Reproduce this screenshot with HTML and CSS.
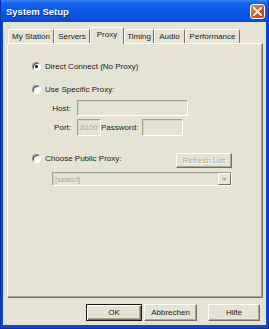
FILE: index.html
```html
<!DOCTYPE html>
<html lang="en">
<head>
    <meta charset="UTF-8">
    <title>System Setup</title>
    <link rel="stylesheet" href="styles.css">
</head>
<body>
<div class="window">
    <div class="titlebar">
        <span class="title">System Setup</span>
        <span class="close">
            <svg width="9" height="9" viewBox="0 0 9 9"><path d="M1 1L8 8M8 1L1 8" stroke="#fff" stroke-width="1.8" stroke-linecap="square"/></svg>
        </span>
    </div>
    <div class="client">
        <div class="tabs">
            <span class="tab tab-station">My Station</span>
            <span class="tab tab-servers">Servers</span>
            <span class="tab tab-proxy active">Proxy</span>
            <span class="tab tab-timing">Timing</span>
            <span class="tab tab-audio">Audio</span>
            <span class="tab tab-perf">Performance</span>
        </div>
        <div class="panel">
            <div class="radio checked"><span class="radio-dot"></span>Direct Connect (No Proxy)</div>
            <div class="radio row-specific"><span class="radio-dot"></span>Use Specific Proxy:</div>
            <div class="fields">
                <div class="field-row">
                    <span class="field-label">Host:</span>
                    <span class="input input-host"></span>
                </div>
                <div class="field-row row-port">
                    <span class="field-label">Port:</span>
                    <span class="input input-port">8100</span>
                    <span class="field-label label-pass">Password:</span>
                    <span class="input input-pass"></span>
                </div>
            </div>
            <div class="public-row">
                <div class="radio"><span class="radio-dot"></span>Choose Public Proxy:</div>
                <span class="btn btn-refresh">Refresh List</span>
            </div>
            <div class="select">
                <span class="select-text">[select]</span>
                <span class="select-arrow">
                    <svg width="5" height="3" viewBox="0 0 5 3"><path d="M0 0H5L2.5 3Z" fill="#aca899"/></svg>
                </span>
            </div>
        </div>
        <div class="buttons">
            <span class="btn btn-dialog default">OK</span>
            <span class="btn btn-dialog btn-cancel">Abbrechen</span>
            <span class="btn btn-dialog btn-help">Hilfe</span>
        </div>
    </div>
</div>
</body>
</html>
```

FILE: styles.css
```css
*{
    margin: 0;
    padding: 0;
    box-sizing: border-box;
}
body{
    font-family: "Liberation Sans", Arial, sans-serif;
    font-size: 8px;
    color: #000000;
    background: #ffffff;
}
.window{
    width: 269px;
    height: 329px;
    display: flex;
    flex-direction: column;
    background: #0a46d8;
    border-left: 1px solid #0831b0;
    border-right: 1px solid #0831b0;
    border-bottom: 1px solid #0831b0;
}
.titlebar{
    height: 22px;
    flex: none;
    display: flex;
    align-items: center;
    justify-content: space-between;
    padding: 0 3px 0 5px;
    background: linear-gradient(#3b87f5 0, #1462ea 3px, #0a57e4 12px, #0852de 18px, #0a48d0 22px);
}
.title{
    color: #ffffff;
    font-weight: bold;
    font-size: 9.5px;
    text-shadow: 1px 1px 0 #0c2f9a;
}
.close{
    width: 15px;
    height: 15px;
    display: flex;
    align-items: center;
    justify-content: center;
    border: 1px solid #ffffff;
    border-radius: 3px;
    background: linear-gradient(135deg, #ec8c6c, #d6522c 55%, #c0401c);
}
.client{
    flex: 1;
    display: flex;
    flex-direction: column;
    margin: 0 2px 3px 2px;
    padding-top: 5px;
    background: #e5e4d4;
}
.tabs{
    height: 16px;
    display: flex;
    align-items: flex-end;
    padding-left: 5px;
}
.tab{
    height: 14px;
    line-height: 13px;
    text-align: center;
    border: 1px solid;
    border-bottom: none;
    border-color: #ffffff #716f64 transparent #ffffff;
    border-radius: 2px 2px 0 0;
    background: #e5e4d4;
    color: #1a1a1a;
}
.tab-station{ width: 46px; }
.tab-servers{ width: 36px; }
.tab-proxy{ width: 34px; }
.tab-timing{ width: 30px; }
.tab-audio{ width: 31px; }
.tab-perf{ width: 55px; }
.tab.active{
    height: 17px;
    line-height: 13px;
    margin-bottom: -1px;
    position: relative;
    z-index: 1;
}
.panel{
    flex: 1;
    margin: 0 3px 0 4px;
    padding: 16px 0 0 24px;
    border: 1px solid;
    border-color: #ffffff #716f64 #716f64 #ffffff;
    box-shadow: inset -1px -1px 0 #aca899;
}
.radio{
    display: flex;
    align-items: center;
    height: 13px;
    color: #1a1a1a;
}
.radio-dot{
    width: 9px;
    height: 9px;
    flex: none;
    margin-right: 4px;
    border-radius: 50%;
    border: 1px solid;
    border-color: #8c8a80 #ffffff #ffffff #8c8a80;
    background: #ffffff;
    box-shadow: inset 1px 1px 0 #505050;
    display: flex;
    align-items: center;
    justify-content: center;
}
.radio.checked .radio-dot::after{
    content: "";
    width: 3px;
    height: 3px;
    border-radius: 50%;
    background: #000000;
}
.row-specific{
    margin-top: 10px;
}
.fields{
    margin: 4px 0 0 13px;
}
.field-row{
    display: flex;
    align-items: center;
    height: 16px;
}
.row-port{
    height: 17px;
    margin-top: 3px;
}
.field-label{
    width: 26px;
    margin-right: 6px;
    text-align: right;
    color: #1a1a1a;
}
.label-pass{
    width: auto;
    margin-right: 4px;
}
.input{
    height: 100%;
    padding-left: 2px;
    line-height: 15px;
    color: #aca899;
    border: 1px solid;
    border-color: #a09f92 #ffffff #ffffff #a09f92;
    box-shadow: inset 1px 1px 0 #d4d3c4;
    background: #e5e4d4;
}
.input-host{ width: 111px; }
.input-port{ width: 24px; }
.input-pass{ width: 41px; }
.public-row{
    width: 200px;
    margin-top: 17px;
    display: flex;
    justify-content: space-between;
    align-items: flex-start;
}
.public-row .radio{
    height: 10px;
}
.btn{
    display: flex;
    align-items: center;
    justify-content: center;
    border: 1px solid;
    border-color: #ffffff #716f64 #716f64 #ffffff;
    box-shadow: inset -1px -1px 0 #aca899;
    background: #e5e4d4;
    color: #1a1a1a;
}
.btn-refresh{
    width: 56px;
    height: 15px;
    color: #aca899;
    text-shadow: 1px 1px 0 #ffffff;
}
.select{
    width: 180px;
    height: 14px;
    margin: 4px 0 0 20px;
    display: flex;
    align-items: center;
    justify-content: space-between;
    border: 1px solid;
    border-color: #a09f92 #ffffff #ffffff #a09f92;
    box-shadow: inset 1px 1px 0 #d4d3c4;
}
.select-text{
    padding-left: 2px;
    color: #aca899;
}
.select-arrow{
    width: 13px;
    height: 12px;
    display: flex;
    align-items: center;
    justify-content: center;
    border: 1px solid;
    border-color: #ffffff #716f64 #716f64 #ffffff;
}
.buttons{
    display: flex;
    justify-content: flex-end;
    padding: 6px 6px 4px 0;
}
.btn-dialog{
    height: 17px;
    width: 52px;
}
.default{
    width: 56px;
    border: 1px solid #1a1a1a;
    box-shadow: inset 1px 1px 0 #ffffff, inset -1px -1px 0 #716f64, inset -2px -2px 0 #aca899;
}
.btn-cancel{
    width: 53px;
    margin-left: 2px;
}
.btn-help{
    margin-left: 11px;
}
```
